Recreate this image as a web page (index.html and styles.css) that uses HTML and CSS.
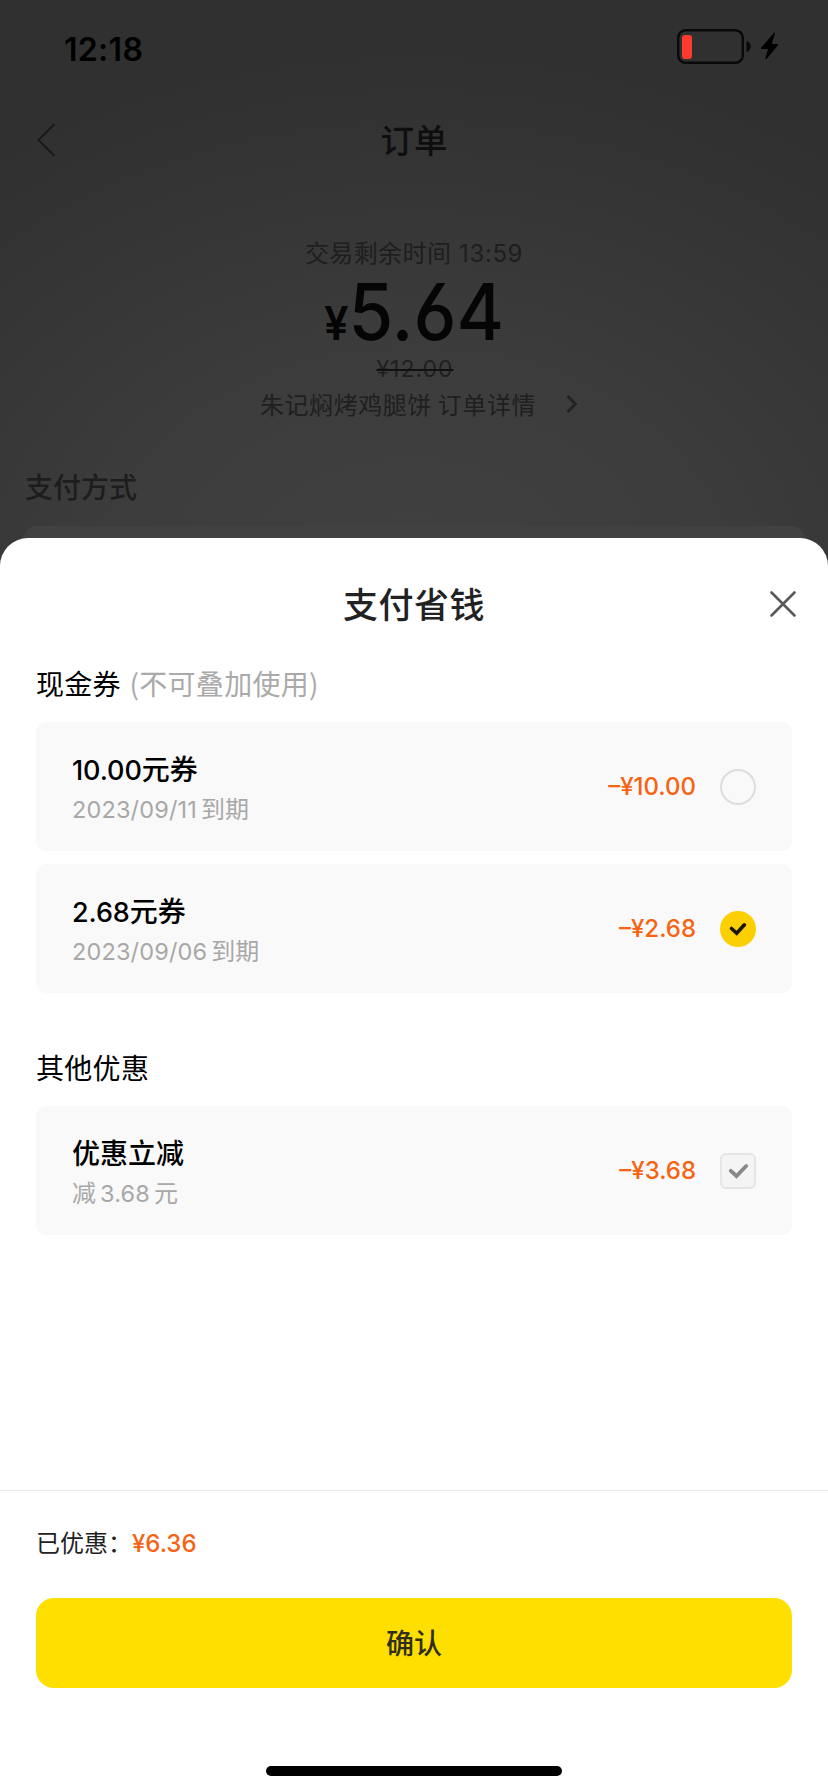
FILE: index.html
```html
<!DOCTYPE html>
<html lang="zh-CN">
<head>
<meta charset="utf-8">
<title>支付省钱</title>
<link rel="stylesheet" href="styles.css">
</head>
<body>
<div class="app">
  <div class="order">
    <div class="status">
      <span class="clock">12:18</span>
      <svg class="battery" width="104" height="36" viewBox="0 0 104 36">
        <rect x="2.2" y="2.2" width="64.6" height="32.6" rx="7.5" fill="none" stroke="#080808" stroke-width="2.4"/>
        <rect x="6" y="7" width="10" height="24" rx="3.2" fill="#ff3b30"/>
        <path d="M70.500 12.800C73.200 14 74.600 16 74.600 18.500S73.200 23 70.500 24.200Z" fill="#080808"/>
        <path d="M97.800 5L85.300 19.500C84.700 20.200 85.200 21 86 21H92.200L89.300 30.200C89 31.200 90 31.500 90.700 30.800L101.800 17.600C102.400 16.900 102 16 101.100 16H95.700L98.900 5.600C99.200 4.600 98.400 4.300 97.800 5Z" fill="#000"/>
      </svg>
    </div>
    <div class="nav">
      <svg class="back" width="20" height="34" viewBox="0 0 20 34"><path d="M17.500 1L1.500 17L17.500 33" fill="none" stroke="#181818" stroke-width="1.800"/></svg>
      <h1 class="nav-title">订单</h1>
    </div>
    <div class="timer">交易剩余时间 <span class="timer-value">13:59</span></div>
    <div class="price"><span class="price-sign">¥</span><span class="price-value">5.64</span></div>
    <div class="origin"><span class="origin-value">¥12.00</span></div>
    <div class="detail">
      <span>朱记焖烤鸡腿饼 订单详情</span>
      <svg width="12" height="18" viewBox="0 0 12 18"><path d="M1.500 1L9.500 9L1.500 17" fill="none" stroke="#222" stroke-width="2.600"/></svg>
    </div>
    <h2 class="methods-title">支付方式</h2>
    <div class="methods-card"></div>
  </div>

  <div class="sheet">
    <div class="sheet-head">
      <h2 class="sheet-title">支付省钱</h2>
      <svg class="close" width="28" height="28" viewBox="0 0 28 28"><path d="M2.500 2.500L25.500 25.500M25.500 2.500L2.500 25.500" fill="none" stroke="#58595a" stroke-width="2.600" stroke-linecap="round"/></svg>
    </div>
    <h3 class="section-title">现金券 <span class="hint">(不可叠加使用)</span></h3>
    <div class="list">
      <div class="card">
        <div class="info"><div class="name"><span class="num-m">10.00</span>元券</div><div class="sub"><span class="num">2023/09/11</span>到期</div></div>
        <div class="amount">–¥10.00</div>
        <div class="radio"></div>
      </div>
      <div class="card">
        <div class="info"><div class="name"><span class="num-m">2.68</span>元券</div><div class="sub"><span class="num">2023/09/06</span>到期</div></div>
        <div class="amount">–¥2.68</div>
        <svg class="mark" width="36" height="36" viewBox="0 0 36 36"><circle cx="18" cy="18" r="18" fill="#fcd000"/><path d="M11.500 17.500L16.700 22.300L24.400 13.800" fill="none" stroke="#1a1600" stroke-width="3.600" stroke-linecap="round"/></svg>
      </div>
    </div>
    <h3 class="section-title other">其他优惠</h3>
    <div class="list">
      <div class="card">
        <div class="info"><div class="name">优惠立减</div><div class="sub">减<span class="num mid">3.68</span>元</div></div>
        <div class="amount">–¥3.68</div>
        <svg class="mark" width="36" height="36" viewBox="0 0 36 36"><rect x="1" y="1" width="34" height="34" rx="5" fill="#f4f4f4" stroke="#e5e5e5" stroke-width="2"/><path d="M10.800 17.800L16.500 23L26.200 13" fill="none" stroke="#888" stroke-width="3.800" stroke-linecap="round"/></svg>
      </div>
    </div>
    <div class="footer">
      <div class="saved">已优惠：<span class="saved-value">¥6.36</span></div>
      <button class="confirm">确认</button>
      <div class="home-bar"></div>
    </div>
  </div>
</div>
</body>
</html>
```

FILE: styles.css
```css
* { box-sizing: border-box; }
body { margin: 0; font-family: "Noto Sans CJK SC", sans-serif; }
h1, h2, h3 { margin: 0; font-weight: 400; }
svg { display: block; }

.app {
  width: 828px;
  height: 1792px;
  display: flex;
  flex-direction: column;
  overflow: hidden;
  background: radial-gradient(ellipse 720px 560px at 50% 600px, #414141 0%, #3c3c3c 45%, #353535 75%, #303030 100%);
}

/* dimmed order page */
.order { height: 538px; flex: none; display: flex; flex-direction: column; }
.status {
  height: 98px;
  padding: 0 48px 0 64px;
  display: flex;
  justify-content: space-between;
  align-items: flex-start;
}
.clock { font: 600 32px/40px Inter, sans-serif; letter-spacing: 0.3px; padding-top: 30px; color: #000; }
.battery { margin-top: 28px; }
.nav { height: 84px; display: grid; grid-template-columns: 100px 1fr 100px; align-items: center; }
.back { margin-left: 37px; }
.nav-title { font-size: 33.5px; font-weight: 500; line-height: 48px; padding-bottom: 3px; text-align: center; color: #0e0e0e; }
.timer { margin-top: 52px; height: 36px; font-size: 24px; letter-spacing: 0.4px; line-height: 36px; text-align: center; color: #1e1e1e; }
.timer-value { font-family: Inter, sans-serif; letter-spacing: 0.6px; margin-left: 2px; }
.price { margin: 7px 0 3px 0; height: 70px; display: flex; justify-content: center; align-items: baseline; font-family: Inter, sans-serif; font-feature-settings: "cv03" 1, "cv02" 0; color: #050505; line-height: 70px; transform: scaleX(0.93); }
.price-sign { font-size: 47px; font-weight: 600; }
.price-value { font-size: 78px; font-weight: 500; }
.origin { height: 36px; padding-left: 2px; text-align: center; font: 400 23px/38px Inter, sans-serif; letter-spacing: 1px; color: #1f1f1f; }
.origin-value { text-decoration: line-through 2px #111; }
.detail { height: 36px; display: flex; justify-content: center; align-items: center; gap: 30px; padding-left: 10px; font-size: 24px; letter-spacing: 0.55px; line-height: 36px; color: #1f1f1f; }
.methods-title { margin: 44px 0 0 25px; font-size: 28px; font-weight: 500; line-height: 40px; color: #1d1d1d; }
.methods-card { margin: auto 24px 0; height: 12px; border-radius: 12px 12px 0 0; background: #414141; }

/* discount sheet */
.sheet { flex: 1; display: flex; flex-direction: column; background: #fff; border-radius: 28px 28px 0 0; }
.sheet-head { height: 116px; padding: 16px 31px 0; display: grid; grid-template-columns: 28px 1fr 28px; align-items: center; }
.sheet-title { grid-column: 2; font-size: 35px; font-weight: 500; letter-spacing: 0.5px; line-height: 52px; padding-bottom: 3px; text-align: center; color: #222; }
.section-title { margin: 9px 36px 0; height: 40px; font-size: 28px; letter-spacing: 0.3px; line-height: 40px; color: #000; }
.section-title.other { margin-top: 54px; }
.hint { color: #aaa; margin-left: 2px; }
.list { margin: 19px 36px 0; display: flex; flex-direction: column; gap: 13px; }
.card { height: 129px; padding: 0 36px; display: flex; align-items: center; background: #f9f9f9; border-radius: 10px; }
.info { flex: 1; padding-top: 1px; }
.name { font-size: 28px; font-weight: 500; line-height: 40px; height: 41px; color: #000; }
.num-m { font-family: Inter, sans-serif; font-size: 27px; font-weight: 500; letter-spacing: -0.1px; }
.sub { height: 38px; font-size: 24px; line-height: 38px; color: #a8a8a8; }
.num { font-family: Inter, sans-serif; font-size: 23.5px; letter-spacing: 0.15px; margin-right: 4px; }
.mid { margin-left: 4px; }
.amount { font: 500 24px/36px Inter, sans-serif; color: #f66412; margin-right: 24px; }
.radio { width: 36px; height: 36px; border: 2px solid #ddd; border-radius: 50%; }
.footer { margin-top: auto; height: 302px; border-top: 1px solid #e8e8e8; display: flex; flex-direction: column; padding: 33px 36px 16px; }
.saved { height: 36px; font-size: 24px; line-height: 36px; color: #222; }
.saved-value { font: 500 24px/36px Inter, sans-serif; color: #f66412; }
.confirm { margin-top: 38px; height: 90px; border: 0; padding: 0 0 3px; border-radius: 18px; background: #fedf00; font: 500 28px/40px "Noto Sans CJK SC", sans-serif; color: #302e1c; }
.home-bar { width: 296px; height: 10px; margin: auto auto 0; border-radius: 5px; background: #000; }
```
